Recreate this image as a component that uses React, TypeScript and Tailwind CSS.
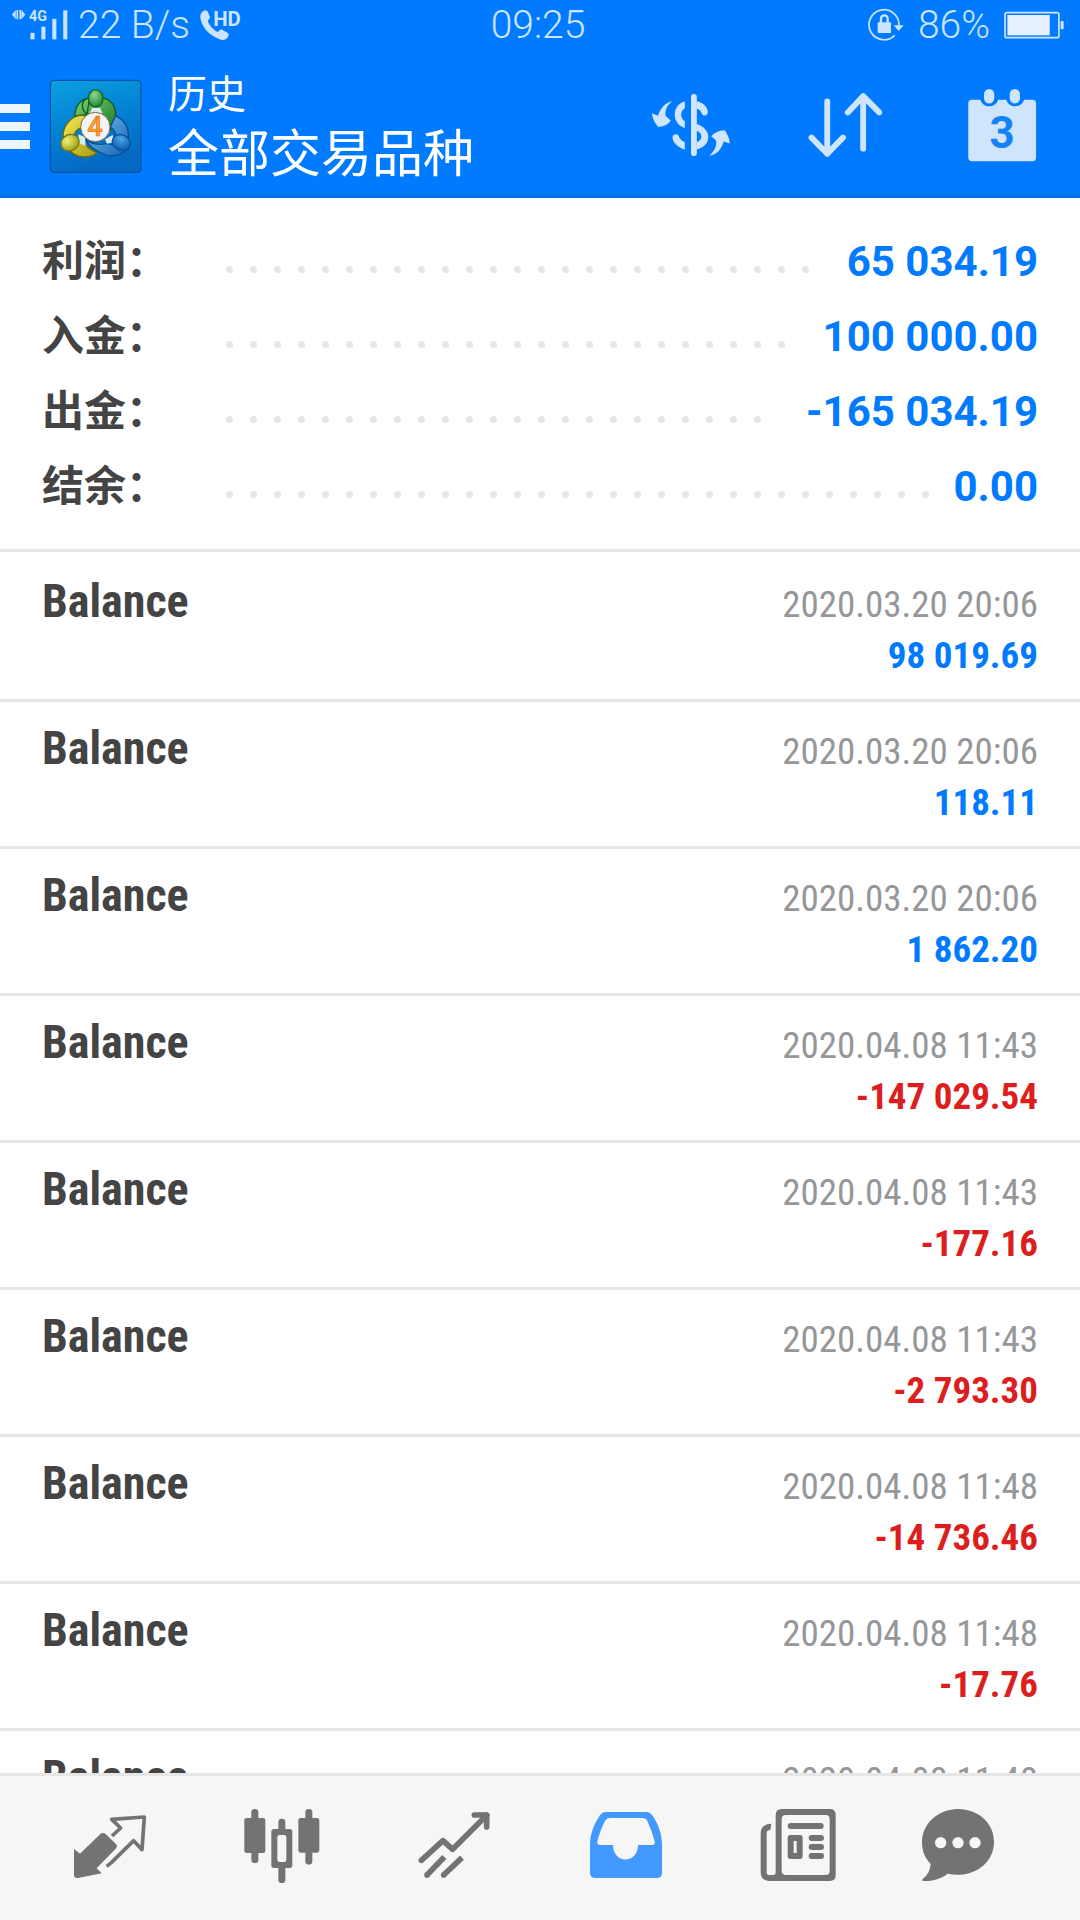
import React from "react";

type Summary = { label: string; value: string };
type Deal = { time: string; amount?: string };

const summary: Summary[] = [
  { label: "利润：", value: "65 034.19" },
  { label: "入金：", value: "100 000.00" },
  { label: "出金：", value: "-165 034.19" },
  { label: "结余：", value: "0.00" },
];

const deals: Deal[] = [
  { time: "2020.03.20 20:06", amount: "98 019.69" },
  { time: "2020.03.20 20:06", amount: "118.11" },
  { time: "2020.03.20 20:06", amount: "1 862.20" },
  { time: "2020.04.08 11:43", amount: "-147 029.54" },
  { time: "2020.04.08 11:43", amount: "-177.16" },
  { time: "2020.04.08 11:43", amount: "-2 793.30" },
  { time: "2020.04.08 11:48", amount: "-14 736.46" },
  { time: "2020.04.08 11:48", amount: "-17.76" },
  { time: "2020.04.08 11:48" },
];

function SignalIcon() {
  return (
    <svg className="w-14 h-8 overflow-visible" viewBox="36 36 164 92" fill="currentColor" aria-hidden="true">
      <path d="M36 51 L47 38 V65 Z M49 38 H54 V65 H49 Z M58 38 H63 V65 H58 Z M64 38 L75 51 L64 65 Z" />
      <text x="86" y="71" fontSize="42" fontWeight="700" fontFamily="Roboto, sans-serif">4G</text>
      <rect x="90" y="105" width="12" height="19" />
      <rect x="122" y="87" width="12" height="37" />
      <rect x="154" y="64" width="12" height="60" />
      <rect x="186" y="39" width="12" height="85" />
    </svg>
  );
}

function CallIcon() {
  return (
    <svg className="w-10 h-8 overflow-visible" viewBox="583 36 118 92" fill="currentColor" aria-hidden="true">
      <path d="M594 40 C600 36 605 39 607 45 L612 58 C613 62 611 65 606 69 C609 82 622 97 636 103 C641 96 644 94 648 96 L664 105 C669 108 669 112 665 118 C659 127 648 128 639 123 C609 111 588 88 584 61 C583 51 587 44 594 40 Z" />
      <text x="622" y="86" fontSize="60" fontWeight="700" fontFamily="Roboto, sans-serif">HD</text>
    </svg>
  );
}

function RotationLockIcon() {
  return (
    <svg className="w-9 h-[34px]" viewBox="950 32 108 98" fill="none" stroke="currentColor" aria-hidden="true">
      <path d="M1043 83 A45 45 0 1 0 1030 112" strokeWidth="5" />
      <path d="M1027 82 H1057 L1042 99 Z" fill="currentColor" stroke="none" />
      <path d="M989 76 V62 A10 10 0 0 1 1009 62 V76" strokeWidth="7" />
      <rect x="979" y="73" width="40" height="32" rx="3" fill="currentColor" stroke="none" />
    </svg>
  );
}

function BatteryIcon() {
  return (
    <svg className="w-[60px] h-7" viewBox="1346 40 177 81" fill="none" stroke="currentColor" aria-hidden="true">
      <rect x="1349" y="44" width="159" height="74" rx="6" strokeWidth="5" />
      <rect x="1356" y="51" width="125" height="60" fill="#e6f1ff" stroke="none" />
      <rect x="1513" y="69" width="9" height="24" rx="3" fill="currentColor" stroke="none" />
    </svg>
  );
}

function LogoIcon() {
  return (
    <svg className="w-[94px] h-[96px]" viewBox="56 26 282 288" aria-hidden="true">
      <defs>
        <linearGradient id="tile" x1="0" y1="0" x2="0.3" y2="1">
          <stop offset="0" stopColor="#0ba0e0" />
          <stop offset="0.55" stopColor="#0480d2" />
          <stop offset="1" stopColor="#0469c2" />
        </linearGradient>
        <linearGradient id="green" x1="0" y1="0" x2="1" y2="1">
          <stop offset="0" stopColor="#7fcf72" />
          <stop offset="1" stopColor="#15751f" />
        </linearGradient>
        <linearGradient id="yellow" x1="0" y1="0" x2="1" y2="1">
          <stop offset="0" stopColor="#f5ea55" />
          <stop offset="1" stopColor="#a99c12" />
        </linearGradient>
        <linearGradient id="blue" x1="0" y1="0" x2="1" y2="1">
          <stop offset="0" stopColor="#7cc4f3" />
          <stop offset="1" stopColor="#0e62b3" />
        </linearGradient>
        <radialGradient id="greenHead" cx="0.4" cy="0.3" r="0.7">
          <stop offset="0" stopColor="#8fd88e" />
          <stop offset="1" stopColor="#1d8a33" />
        </radialGradient>
        <radialGradient id="yellowHead" cx="0.4" cy="0.3" r="0.7">
          <stop offset="0" stopColor="#eff07a" />
          <stop offset="1" stopColor="#a3a016" />
        </radialGradient>
        <radialGradient id="blueHead" cx="0.4" cy="0.3" r="0.7">
          <stop offset="0" stopColor="#4da6e8" />
          <stop offset="1" stopColor="#0a5cab" />
        </radialGradient>
      </defs>
      <rect x="60" y="30" width="272" height="276" rx="12" fill="url(#tile)" stroke="#0453a8" strokeWidth="4" />
      <g strokeLinejoin="round" strokeWidth="4">
        <path d="M170 132 C152 118 150 92 172 84 L222 84 C246 90 258 112 256 140 C253 166 240 184 224 193 L208 128 Z M133 137 C134 107 151 86 178 83 L170 133 Z" fill="url(#green)" stroke="#0b5c23" />
        <path d="M256 136 C286 152 298 178 293 208 L258 208 C258 192 252 178 240 170 Z M166 208 C186 222 210 225 230 219 L290 234 C272 259 237 263 213 248 C191 239 175 225 166 208 Z" fill="url(#blue)" stroke="#0a4c94" />
        <path d="M165 136 C126 130 98 164 98 198 L130 205 C130 185 142 172 160 172 Z M100 226 L156 206 C164 226 180 240 200 246 C182 266 138 264 120 242 Z" fill="url(#yellow)" stroke="#69690f" />
        <path d="M186 112 H209 L217 128 H178 Z M144 192 L164 200 L166 226 L145 219 Z M224 207 L247 194 L252 216 L230 220 Z" fill="#d9ece8" stroke="none" />
        <ellipse cx="196" cy="84" rx="22" ry="26" fill="url(#greenHead)" stroke="#116429" />
        <ellipse cx="119" cy="217" rx="28" ry="24" fill="url(#yellowHead)" stroke="#75760f" transform="rotate(-25 119 217)" />
        <ellipse cx="273" cy="217" rx="28" ry="23" fill="url(#blueHead)" stroke="#0a509c" transform="rotate(25 273 217)" />
      </g>
      <circle cx="195" cy="170" r="44" fill="#f4f4f6" stroke="#746a50" strokeWidth="3" />
      <text x="194" y="198" textAnchor="middle" fontSize="82" fontWeight="500" fontFamily="Roboto, sans-serif" fill="#f9a03c" stroke="#e8760f" strokeWidth="2">4</text>
    </svg>
  );
}

function CurrencyIcon() {
  return (
    <svg className="w-20 h-[66px]" viewBox="320 276 232 192" fill="currentColor" aria-hidden="true">
      <path d="M382 303 C366 315 360 328 362 345 L377 359 Q368 375 341 378 Q325 361 322 338 L340 345 C348 322 361 307 382 303 Z" />
      <path d="M489 461 C504 449 511 434 509 417 L495 405 Q508 388 534 387 Q547 404 549 426 L531 420 C524 444 510 459 489 461 Z" />
      <path d="M444.500 290 V454" fill="none" stroke="currentColor" strokeWidth="17" strokeLinecap="round" />
      <path d="M418 303 V323 C404 332 404 351 418 361 V381 C379 368 379 315 418 303 Z" />
      <path d="M418 443 C398 437 384 424 382 408 C382 399 394 395 400 403 C403 412 409 418 418 422 Z" />
      <path d="M452 303 C471 306 485 320 485 335 C484 345 473 348 468 340 C465 331 460 326 452 324 Z" />
      <path fillRule="evenodd" d="M452 369 C498 382 498 433 452 443 Z M452 389 V422 C471 417 471 395 452 389 Z" />
    </svg>
  );
}

function SortIcon() {
  return (
    <svg className="w-[84px] h-[68px]" viewBox="778 278 243 197" fill="none" stroke="currentColor" strokeWidth="17" strokeLinecap="round" strokeLinejoin="round" aria-hidden="true">
      <path d="M836.500 308 V460 M791 413 L836.500 460 L882 413" />
      <path d="M940.500 445 V293 M896 340 L940.500 293 L987 340" />
    </svg>
  );
}

function CalendarIcon() {
  return (
    <svg className="w-[70px] h-[74px]" viewBox="1240 266 203 216" fill="currentColor" aria-hidden="true">
      <path d="M1254 300 H1278 C1283 314 1294 319 1304 319 C1314 319 1326 314 1330 300 H1354 C1359 314 1369 319 1380 319 C1391 319 1401 314 1406 300 H1430 Q1441 300 1441 311 V468 Q1441 480 1430 480 H1254 Q1243 480 1243 468 V311 Q1243 300 1254 300 Z" />
      <rect x="1289" y="269" width="30" height="42" rx="15" />
      <rect x="1364" y="269" width="30" height="42" rx="15" />
      <text x="1342" y="441" textAnchor="middle" fontSize="128" fontWeight="700" fontFamily="Roboto, sans-serif" fill="#1583f8">3</text>
    </svg>
  );
}

function QuotesIcon() {
  return (
    <svg className="size-20" viewBox="210 324 240 240" fill="currentColor" aria-hidden="true">
      <path d="M222 447 L240 461 L301 402 Q309 396 317 402 L348 432 Q354 439 347 446 L290 505 L305 520 L234 534 Q222 535 222 525 Z" />
      <path d="M336 408 L362 384 L335 358 L433 351 L426 449 L401 422 L334 488 L320 499" fill="none" stroke="currentColor" strokeWidth="11" strokeLinejoin="round" />
    </svg>
  );
}

function ChartIcon() {
  return (
    <svg className="size-20" viewBox="725 324 240 240" fill="currentColor" aria-hidden="true">
      <rect x="753" y="327" width="21" height="162" rx="10" />
      <rect x="732" y="354" width="63" height="105" rx="7" />
      <rect x="915" y="327" width="21" height="167" rx="10" />
      <rect x="894" y="354" width="63" height="104" rx="7" />
      <rect x="834" y="356" width="21" height="193" rx="10" />
      <rect x="813" y="387" width="63" height="117" rx="8" />
      <rect x="831" y="405" width="27" height="81" rx="7" fill="#f6f6f6" />
    </svg>
  );
}

function TradeIcon() {
  return (
    <svg className="size-20" viewBox="160 324 240 240" fill="none" stroke="currentColor" strokeWidth="17" aria-hidden="true">
      <path d="M182 481 L247 422 L276 448 L378 346" strokeLinecap="round" strokeLinejoin="round" />
      <path d="M341 345 H378 V381" strokeLinecap="round" strokeLinejoin="round" />
      <path d="M251 471 L199 525 M304 473 L249 525" />
      <path d="M199 525 h0.100 M249 525 h0.100" strokeLinecap="round" />
    </svg>
  );
}

function HistoryIcon() {
  return (
    <svg className="size-20" viewBox="681 324 240 240" fill="currentColor" aria-hidden="true">
      <path
        fillRule="evenodd"
        d="M741 336 H863 Q873 336 879 345 C899 373 909 402 909 437 V518 Q909 534 893 534 H709 Q693 534 693 518 V437 C693 402 704 373 723 346 Q730 336 741 336 Z M752 354 Q743 354 738 363 Q724 389 715 424 Q713 435 724 435 H762 C762 493 837 493 837 435 H878 Q890 435 887 424 Q878 389 865 363 Q861 354 851 354 Z"
      />
    </svg>
  );
}

function NewsIcon() {
  return (
    <svg className="size-20" viewBox="121 324 240 240" fill="currentColor" aria-hidden="true">
      <path
        fillRule="evenodd"
        d="M161 371 L158 390 Q147 390 147 400 V518 Q147 525 154 525 H167 Q174 525 174 518 V345 Q174 327 192 327 H337 Q354 327 354 344 V526 Q354 543 337 543 H157 Q129 543 129 516 V402 Q129 372 161 371 Z M205 345 Q192 345 192 358 V512 Q192 525 205 525 H324 Q336 525 336 512 V358 Q336 345 324 345 Z"
      />
      <rect x="210" y="369" width="108" height="18" rx="9" />
      <path fillRule="evenodd" d="M218 405 H247 Q255 405 255 413 V468 Q255 477 247 477 H218 Q210 477 210 468 V413 Q210 405 218 405 Z M228 423 V459 H237 V423 Z" />
      <rect x="273" y="405" width="46" height="18" rx="9" />
      <rect x="273" y="432" width="46" height="18" rx="9" />
      <rect x="273" y="459" width="46" height="18" rx="9" />
    </svg>
  );
}

function ChatIcon() {
  return (
    <svg className="size-20" viewBox="594 324 240 240" fill="currentColor" aria-hidden="true">
      <path d="M714 327 C775 327 822 370 822 425 C822 492 757 537 683 521 C663 536 638 544 608 543 Q604 540 610 535 Q630 520 632 492 C612 471 606 450 606 426 C607 370 655 327 714 327 Z" />
      <circle cx="662" cy="428" r="17" fill="#f6f6f6" />
      <circle cx="714" cy="428" r="17" fill="#f6f6f6" />
      <circle cx="765" cy="428" r="17" fill="#f6f6f6" />
    </svg>
  );
}

const tabs = [
  { name: "行情", icon: <QuotesIcon /> },
  { name: "图表", icon: <ChartIcon /> },
  { name: "交易", icon: <TradeIcon /> },
  { name: "历史", icon: <HistoryIcon />, active: true },
  { name: "新闻", icon: <NewsIcon /> },
  { name: "聊天", icon: <ChatIcon /> },
];

function StatusBar() {
  return (
    <div className="grid h-[50px] grid-cols-[1fr_auto_1fr] items-center pr-4 pl-3 text-[39px] leading-[50px] font-light text-[#cce4ff]">
      <div className="flex items-center gap-2.5">
        <SignalIcon />
        <span>22 B/s</span>
        <CallIcon />
      </div>
      <span>09:25</span>
      <div className="flex items-center justify-end gap-3.5">
        <RotationLockIcon />
        <span>86%</span>
        <BatteryIcon />
      </div>
    </div>
  );
}

function Header() {
  return (
    <header className="shrink-0 border-b-3 border-[#0070e8] bg-[#007aff]">
      <StatusBar />
      <div className="flex h-[145px] items-center pt-[5px] pr-[43px]">
        <button aria-label="菜单" className="flex w-[30px] flex-col gap-[9px] pt-0.5">
          <span className="h-[9px] w-full bg-[#edf5ff]" />
          <span className="h-[9px] w-full bg-[#edf5ff]" />
          <span className="h-[9px] w-full bg-[#edf5ff]" />
        </button>
        <div className="ml-[19px] pt-1">
          <LogoIcon />
        </div>
        <h1 className="ml-[25px] flex-1 pt-1 font-normal text-white">
          <span className="block text-[39px] leading-[56px]">历史</span>
          <span className="block text-[51px] leading-[64px]">全部交易品种</span>
        </h1>
        <div className="flex items-center gap-[76px] text-[#cfe4fd]">
          <button aria-label="货币">
            <CurrencyIcon />
          </button>
          <button aria-label="排序">
            <SortIcon />
          </button>
          <button aria-label="日期">
            <CalendarIcon />
          </button>
        </div>
      </div>
    </header>
  );
}

function SummaryRow({ label, value }: Summary) {
  return (
    <div className="flex h-[75px] items-center">
      <dt className="w-[184px] text-[42px] leading-[60px] font-bold text-[#444444]">{label}</dt>
      <dd className="flex flex-1 items-center">
        <span className="mt-4 flex h-[7px] flex-1 flex-wrap gap-x-[17px] gap-y-4 overflow-hidden" aria-hidden="true">
          {Array.from({ length: 40 }, (_, i) => (
            <i key={i} className="size-[7px] rounded-full bg-[#e6e6e6]" />
          ))}
        </span>
        <span className="ml-[23px] text-[42px] leading-[60px] font-bold text-[#007aff]">{value}</span>
      </dd>
    </div>
  );
}

function DealRow({ time, amount }: Deal) {
  const color = amount?.startsWith("-") ? "text-[#dc1e1e]" : "text-[#007aff]";
  return (
    <li className="flex h-[147px] items-baseline justify-between border-b-3 border-[#e6e6e6] px-[42px] pt-[21px] font-['Roboto_Condensed','Liberation_Sans_Narrow',Roboto,sans-serif]">
      <span className="text-[46px] leading-[51px] font-bold text-[#444444]">Balance</span>
      <div className="text-right text-[37px] leading-[51px]">
        <time className="block text-[#959799]">{time}</time>
        {amount && <span className={`block font-bold ${color}`}>{amount}</span>}
      </div>
    </li>
  );
}

export default function App() {
  return (
    <div className="flex h-screen flex-col overflow-hidden bg-white font-[Roboto,'Noto_Sans_CJK_SC',sans-serif]" lang="zh-CN">
      <Header />

      <main className="min-h-0 flex-1 overflow-y-auto [scrollbar-width:none]">
        <dl className="border-b-3 border-[#e6e6e6] px-[42px] pt-[26px] pb-[25px]">
          {summary.map((row) => (
            <SummaryRow key={row.label} {...row} />
          ))}
        </dl>
        <ul className="pt-[3px]">
          {deals.map((deal, i) => (
            <DealRow key={i} {...deal} />
          ))}
        </ul>
      </main>

      <nav className="grid h-[147px] shrink-0 grid-cols-[43fr_43fr_43fr_43fr_43fr_37fr] items-center border-t-3 border-[#e6e6e6] bg-[#f6f6f6] pr-12 pl-6">
        {tabs.map((tab) => (
          <button
            key={tab.name}
            aria-label={tab.name}
            className={`flex justify-center ${tab.active ? "text-[#4299ff]" : "text-[#737373]"}`}
          >
            {tab.icon}
          </button>
        ))}
      </nav>
    </div>
  );
}
